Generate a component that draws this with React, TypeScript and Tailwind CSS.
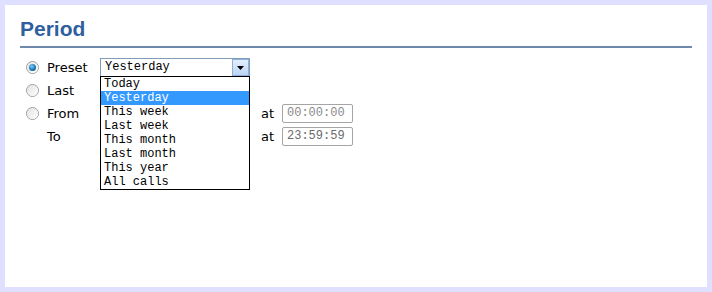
import React from "react";

const sans = { fontFamily: '"DejaVu Sans", Verdana, sans-serif' };
const mono = { fontFamily: '"Liberation Mono", "Courier New", monospace' };

function Radio({ checked }: { checked?: boolean }) {
  return (
    <div className="w-[13px] h-[13px] rounded-full border border-[#9a9a9a] bg-gradient-to-br from-[#d0d0d0] to-[#f8f8f8] flex items-center justify-center">
      <div className="w-[11px] h-[11px] rounded-full bg-gradient-to-br from-[#e2e2e2] to-[#ffffff] flex items-center justify-center">
        {checked && (
          <div className="w-[7px] h-[7px] rounded-full bg-[radial-gradient(circle_at_40%_35%,#7fd0f5,#1a77b7_55%,#0d3d66)]" />
        )}
      </div>
    </div>
  );
}

const items = ["Today", "Yesterday", "This week", "Last week", "This month", "Last month", "This year", "All calls"];

export default function App() {
  return (
    <div className="w-[712px] h-[292px] bg-[#dfdfff] p-[5px]">
      <div className="w-full h-full bg-white px-[15px] pt-[11px]">
        <h1 className="text-[21px] font-bold text-[#2f5f9e] leading-[25px]" style={{ fontFamily: '"Liberation Sans", Arial, sans-serif' }}>
          Period
        </h1>
        <div className="mt-[5px] h-[2px] bg-[#6f89aa]" />
        <div className="mt-[8px] text-[13px] text-black" style={sans}>
          <div className="h-[23px] flex items-center">
            <div className="ml-[6px] w-[21px]"><Radio checked /></div>
            <div className="w-[53px]">Preset</div>
            <div className="relative">
              <div className="w-[150px] h-[19px] border border-[#7f9db9] flex items-center bg-white">
                <div className="flex-1 pl-[4px] text-[12px] leading-[17px]" style={mono}>Yesterday</div>
                <div className="w-[17px] h-[17px] border border-[#8fb0dc] bg-gradient-to-b from-[#e3efff] to-[#bcd4f3] flex items-center justify-center">
                  <svg width="7" height="4" viewBox="0 0 7 4"><path d="M0 0H7L3.5 4Z" fill="#000" /></svg>
                </div>
              </div>
              <div className="absolute left-0 top-[18px] w-[150px] border border-black bg-white z-10 text-[12px]" style={mono}>
                {items.map((it) => (
                  <div
                    key={it}
                    className={
                      "h-[14px] leading-[14px] pl-[3px] " +
                      (it === "Yesterday" ? "bg-[#3399ff] text-white" : "text-black")
                    }
                  >
                    {it}
                  </div>
                ))}
              </div>
            </div>
          </div>
          <div className="h-[23px] flex items-center">
            <div className="ml-[6px] w-[21px]"><Radio /></div>
            <div className="w-[53px]">Last</div>
          </div>
          <div className="h-[23px] flex items-center">
            <div className="ml-[6px] w-[21px]"><Radio /></div>
            <div className="w-[53px]">From</div>
            <div className="w-[161px]" />
            <div className="w-[21px]">at</div>
            <div className="w-[71px] h-[19px] border border-[#a5a5a5] rounded-[2px] pl-[4px] text-[12px] leading-[17px] text-[#8a8a8a]" style={mono}>00:00:00</div>
          </div>
          <div className="h-[23px] flex items-center">
            <div className="ml-[6px] w-[21px]" />
            <div className="w-[53px]">To</div>
            <div className="w-[161px]" />
            <div className="w-[21px]">at</div>
            <div className="w-[71px] h-[19px] border border-[#a5a5a5] rounded-[2px] pl-[4px] text-[12px] leading-[17px] text-[#6a6a6a]" style={mono}>23:59:59</div>
          </div>
        </div>
      </div>
    </div>
  );
}
